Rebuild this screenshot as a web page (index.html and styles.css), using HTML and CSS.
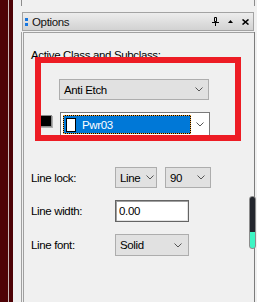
FILE: index.html
```html
<!DOCTYPE html>
<html lang="en">
<head>
  <meta charset="UTF-8">
  <title>Options</title>
  <link rel="stylesheet" href="styles.css">
</head>
<body>
  <div class="board"></div>
  <div class="gutter"></div>

  <div class="dock">
    <div class="prev"></div>

    <div class="titlebar">
      <span class="grip"><i></i><i></i></span>
      <span class="title">Options</span>
      <span class="tools">
        <svg width="7" height="9" viewBox="0 0 7 9"><path d="M2.5 0.5h2v4h-2z M0 5.5h7 M3.5 6v3" fill="none" stroke="#000" stroke-width="1"/></svg>
        <svg width="5" height="3" viewBox="0 0 5 3"><path d="M0 3L2.5 0L5 3z" fill="#000"/></svg>
        <svg width="7" height="6" viewBox="0 0 7 6"><path d="M0.5 0.5L6.5 5.5M6.5 0.5L0.5 5.5" stroke="#000" stroke-width="1.6"/></svg>
      </span>
    </div>

    <div class="panel">
      <div class="panel-body">
        <p class="caption">Active Class and Subclass:</p>

        <div class="combo wide">
          <span>Anti Etch</span>
          <svg class="chev" width="8" height="5" viewBox="0 0 8 5"><polyline points="0.5,0.5 4,4 7.5,0.5" fill="none" stroke="#555"/></svg>
        </div>

        <div class="sub-row">
          <span class="swatch"></span>
          <div class="combo wide white">
            <span class="sel"><span class="chip"></span>Pwr03</span>
            <svg class="chev" width="8" height="5" viewBox="0 0 8 5"><polyline points="0.5,0.5 4,4 7.5,0.5" fill="none" stroke="#555"/></svg>
          </div>
        </div>

        <div class="fields">
          <span class="label">Line lock:</span>
          <div class="pair">
            <div class="combo narrow">
              <span>Line</span>
              <svg class="chev" width="8" height="5" viewBox="0 0 8 5"><polyline points="0.5,0.5 4,4 7.5,0.5" fill="none" stroke="#555"/></svg>
            </div>
            <div class="combo angle">
              <span>90</span>
              <svg class="chev" width="8" height="5" viewBox="0 0 8 5"><polyline points="0.5,0.5 4,4 7.5,0.5" fill="none" stroke="#555"/></svg>
            </div>
          </div>

          <span class="label">Line width:</span>
          <div class="textbox">0.00</div>

          <span class="label">Line font:</span>
          <div class="combo mid">
            <span>Solid</span>
            <svg class="chev" width="8" height="5" viewBox="0 0 8 5"><polyline points="0.5,0.5 4,4 7.5,0.5" fill="none" stroke="#555"/></svg>
          </div>
        </div>
      </div>
    </div>
  </div>

  <div class="edge"></div>

  <!-- overlays -->
  <div class="scroll-thumb"></div>
  <div class="annotation"></div>
</body>
</html>
```

FILE: styles.css
```css
/* Options dock panel */
body {
  margin: 0;
  width: 257px;
  height: 302px;
  overflow: hidden;
  position: relative;
  display: flex;
  background-color: #f0f0f0;
  font-family: "Liberation Sans", Arial, sans-serif;
  font-size: 11.5px;
  letter-spacing: -0.35px;
  color: #000;
}

.board {
  width: 13px;
  background: linear-gradient(to right, #4e0206 0 8px, #c9b9b9 8px 9px, #4e0206 9px 13px);
}

.gutter {
  width: 8px;
}

.dock {
  width: 234px;
  display: flex;
  flex-direction: column;
}

.prev {
  height: 6px;
  border-left: 1px solid #8c8c8c;
  border-right: 1px solid #8c8c8c;
  box-sizing: border-box;
}

.titlebar {
  margin: 6px 1px 1px 1px;
  height: 19px;
  box-sizing: border-box;
  border: 1px solid #a3a3a3;
  background: linear-gradient(#ededed, #d2d2d2);
  display: flex;
  align-items: center;
  padding-left: 2px;
}

.grip {
  display: flex;
  flex-direction: column;
  gap: 2px;
  margin-right: 4px;
}

.grip i {
  display: block;
  width: 3px;
  height: 3px;
  background-color: #1877e0;
}

.title {
  color: #111;
}

.tools {
  margin-left: auto;
  margin-right: 4px;
  display: flex;
  align-items: center;
  gap: 9px;
}

.tools svg {
  display: block;
}

.panel {
  flex: 1;
  border-left: 1px solid #a0a0a0;
  border-right: 1px solid #7c7c7c;
  padding-left: 1px;
}

.panel-body {
  height: 100%;
  box-sizing: border-box;
  border-left: 1px solid #a0a0a0;
  border-top: 1px solid #a0a0a0;
  padding-left: 7px;
}

.caption {
  margin: 15px 0 0 0;
  line-height: 14px;
}

.combo {
  box-sizing: border-box;
  height: 21px;
  border: 1px solid #adadad;
  background-color: #e1e1e1;
  display: flex;
  align-items: center;
  padding: 0 5px 0 4px;
}

.combo .chev {
  margin-left: auto;
  display: block;
}

.wide {
  width: 150px;
  margin-left: 28px;
  margin-top: 17px;
}

.sub-row {
  display: flex;
  align-items: flex-start;
  margin-top: 12px;
}

.sub-row .wide {
  margin: 0 0 0 8px;
}

.swatch {
  width: 10px;
  height: 10px;
  margin: 3px 0 0 9px;
  background-color: #000;
  border: 1px solid #8a8a8a;
  box-shadow: 1px 1px 0 #b0b0b0;
}

.white {
  height: 24px;
  background-color: #fff;
  border-color: #7a7a7a;
  padding: 2px 5px 1px 2px;
  align-items: stretch;
}

.white .chev {
  align-self: center;
}

.sel {
  width: 128px;
  box-sizing: border-box;
  border: 1px dotted #f5a83a;
  background: linear-gradient(#0078d7, #0078d7) padding-box, linear-gradient(#000, #000) border-box;
  color: #fff;
  display: flex;
  align-items: center;
  padding-left: 2px;
}

.chip {
  width: 8px;
  height: 12px;
  background-color: #fff;
  border: 1px solid #000;
  margin-right: 6px;
}

.fields {
  margin-top: 31px;
  display: grid;
  grid-template-columns: 84px auto;
  row-gap: 12px;
  align-items: center;
}

.pair {
  display: flex;
  gap: 8px;
}

.narrow {
  width: 42px;
  padding-right: 2px;
}

.angle {
  width: 46px;
}

.mid {
  width: 74px;
  height: 22px;
  padding-right: 6px;
}

.textbox {
  width: 74px;
  height: 22px;
  box-sizing: border-box;
  border: 1px solid #646464;
  box-shadow: inset 1px 1px 0 #a0a0a0, inset -1px -1px 0 #e3e3e3;
  background-color: #fff;
  padding-left: 3px;
  display: flex;
  align-items: center;
}

.edge {
  width: 2px;
}

.scroll-thumb {
  position: absolute;
  left: 249px;
  top: 196px;
  width: 7px;
  height: 53px;
  box-sizing: border-box;
  border: 1px solid #8c8c8c;
  border-radius: 3px;
  background: linear-gradient(#23262d 0 68%, #3df5c4 68% 100%);
}

.annotation {
  position: absolute;
  left: 35px;
  top: 57px;
  width: 206px;
  height: 84px;
  box-sizing: border-box;
  border: 6px solid #ed1c24;
}
```
